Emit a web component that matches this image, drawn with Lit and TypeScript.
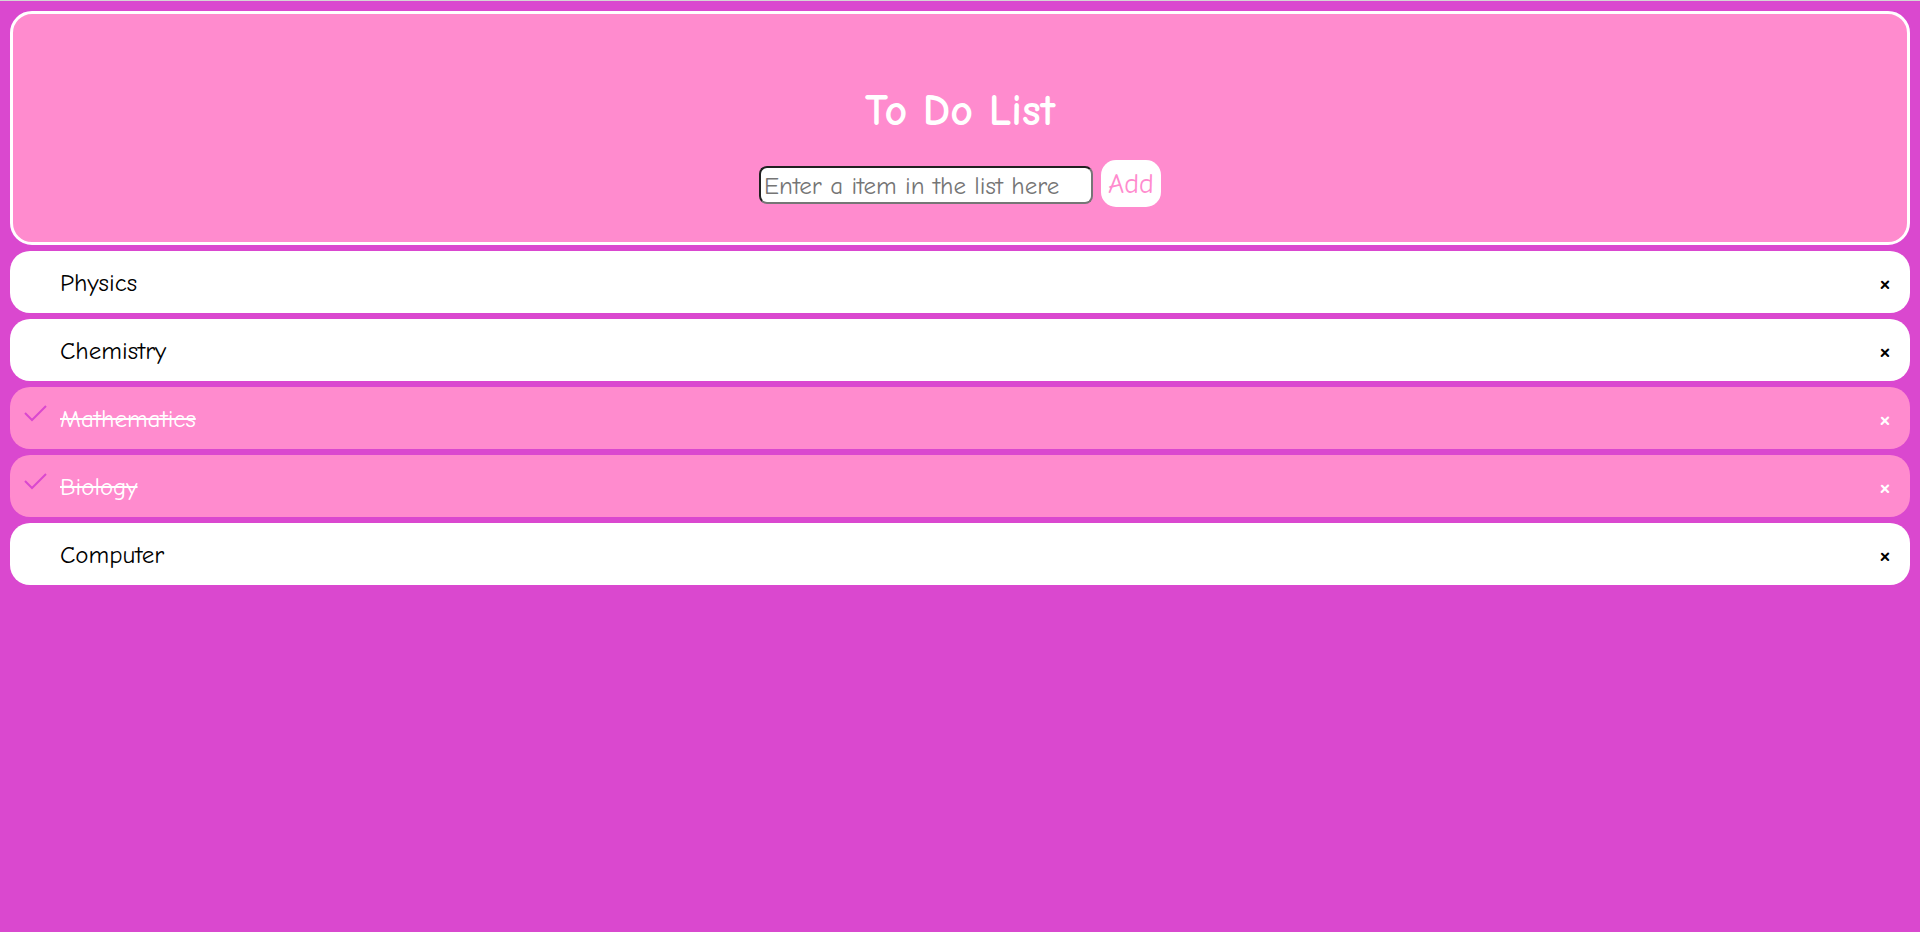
import { LitElement, html, css, svg, nothing } from "lit";
import { customElement, state } from "lit/decorators.js";
import { classMap } from "lit/directives/class-map.js";

interface Item {
  text: string;
  done: boolean;
}

const tick = svg`<path d="M1 8 L8 15 L22 1" fill="none" stroke="currentColor" stroke-width="2" />`;

@customElement("app-root")
export class AppRoot extends LitElement {
  static styles = css`
    :host {
      display: block;
      box-sizing: border-box;
      min-height: 100vh;
      padding: 10px;
      border-top: 1px solid #d5d5d5;
      background: #da48cf;
      font-family: "Comic Sans MS", "Comic Neue", "Noto Sans", sans-serif;
      color: #000;
    }
    .header {
      display: flex;
      flex-direction: column;
      align-items: center;
      gap: 18px;
      padding: 66px 32px 35px;
      border: 3px solid #fff;
      border-radius: 22px;
      background: #ff8bce;
    }
    .title {
      margin: 0;
      font-size: 44px;
      line-height: 62px;
      font-weight: 700;
      color: #fff;
    }
    .form {
      display: flex;
      align-items: flex-end;
      gap: 8px;
    }
    .field {
      box-sizing: border-box;
      width: 334px;
      height: 38px;
      margin-bottom: 3px;
      padding: 1px 3px;
      border: 2px inset #767676;
      border-radius: 8px;
      background: #fff;
      font: inherit;
      font-size: 25px;
    }
    .field::placeholder {
      color: #757575;
    }
    .add {
      height: 47px;
      width: 60px;
      padding: 0;
      border: 0;
      border-radius: 15px;
      background: #fff;
      color: #ff8bce;
      font: inherit;
      font-size: 28px;
    }
    .list {
      display: flex;
      flex-direction: column;
      gap: 6px;
      margin: 6px 0 0;
      padding: 0;
      list-style: none;
    }
    .item {
      display: grid;
      grid-template-columns: 24px 1fr auto;
      column-gap: 12px;
      align-items: center;
      height: 62px;
      padding: 0 15px 0 14px;
      border-radius: 20px;
      background: #fff;
      font-size: 25px;
      cursor: pointer;
    }
    .item.done {
      background: #ff8bce;
      color: #fff;
    }
    .item.done .text {
      text-decoration: line-through 2px;
    }
    .mark {
      display: flex;
      padding-bottom: 10px;
      color: #da48cf;
    }
    .remove {
      width: 20px;
      height: 32px;
      padding: 0;
      border: 0;
      background: none;
      color: inherit;
      font: inherit;
      font-size: 34px;
      line-height: 32px;
      cursor: pointer;
    }
  `;

  @state() private items: Item[] = [
    { text: "Physics", done: false },
    { text: "Chemistry", done: false },
    { text: "Mathematics", done: true },
    { text: "Biology", done: true },
    { text: "Computer", done: false },
  ];

  private add(event: Event) {
    event.preventDefault();
    const field = this.renderRoot.querySelector<HTMLInputElement>(".field")!;
    const text = field.value.trim();
    if (text) {
      this.items = [...this.items, { text, done: false }];
      field.value = "";
    }
  }

  private toggle(item: Item) {
    this.items = this.items.map((i) => (i === item ? { ...i, done: !i.done } : i));
  }

  private remove(event: Event, item: Item) {
    event.stopPropagation();
    this.items = this.items.filter((i) => i !== item);
  }

  render() {
    return html`
      <header class="header">
        <h1 class="title">To Do List</h1>
        <form class="form" @submit=${this.add}>
          <input class="field" type="text" aria-label="New item" placeholder="Enter a item in the list here" />
          <button class="add" type="submit">Add</button>
        </form>
      </header>
      <ul class="list">
        ${this.items.map(
          (item) => html`
            <li class=${classMap({ item: true, done: item.done })} @click=${() => this.toggle(item)}>
              <span class="mark">
                ${item.done ? html`<svg width="24" height="17" viewBox="0 0 24 17" aria-hidden="true">${tick}</svg>` : nothing}
              </span>
              <span class="text">${item.text}</span>
              <button class="remove" type="button" aria-label="Remove ${item.text}" @click=${(e: Event) => this.remove(e, item)}>×</button>
            </li>
          `
        )}
      </ul>
    `;
  }
}
